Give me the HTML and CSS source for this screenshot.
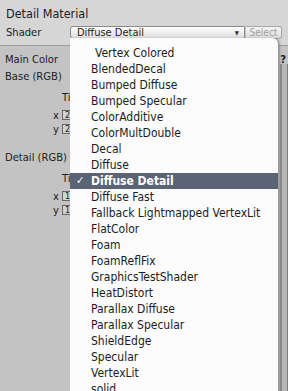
FILE: index.html
```html
<!DOCTYPE html>
<html>
<head>
  <meta charset="UTF-8">
  <meta name="viewport" content="width=device-width,initial-scale=1.0">
  <title>Detail Material</title>
  <link rel="stylesheet" href="styles.css">
</head>
<body>
  <div class="inspector">
    <div class="header">
      <div class="title">Detail Material</div>
      <div class="shader-row">
        <span class="shader-label">Shader</span>
        <div class="dropdown">
          <span>Diffuse Detail</span>
          <span class="arrow">&#9660;</span>
        </div>
        <div class="select-btn">Select</div>
      </div>
    </div>

    <div class="props">
      <div class="row head-row">
        <span>Main Color</span>
        <span class="help">?</span>
      </div>
      <div class="row">Base (RGB)</div>

      <div class="tiling">
        <div class="tl-head">Ti</div>
        <div class="tl-row"><span class="axis">x</span><span class="box">2</span></div>
        <div class="tl-row"><span class="axis">y</span><span class="box">2</span></div>
      </div>

      <div class="row detail">Detail (RGB)</div>

      <div class="tiling">
        <div class="tl-head">Ti</div>
        <div class="tl-row"><span class="axis">x</span><span class="box">1</span></div>
        <div class="tl-row"><span class="axis">y</span><span class="box">1</span></div>
      </div>
    </div>

    <div class="scroll-strip"></div>

    <ul class="menu">
      <li class="indent">Vertex Colored</li>
      <li>BlendedDecal</li>
      <li>Bumped Diffuse</li>
      <li>Bumped Specular</li>
      <li>ColorAdditive</li>
      <li>ColorMultDouble</li>
      <li>Decal</li>
      <li>Diffuse</li>
      <li class="active"><span class="check">&#10003;</span>Diffuse Detail</li>
      <li>Diffuse Fast</li>
      <li>Fallback Lightmapped VertexLit</li>
      <li>FlatColor</li>
      <li>Foam</li>
      <li>FoamReflFix</li>
      <li>GraphicsTestShader</li>
      <li>HeatDistort</li>
      <li>Parallax Diffuse</li>
      <li>Parallax Specular</li>
      <li>ShieldEdge</li>
      <li>Specular</li>
      <li>VertexLit</li>
      <li>solid</li>
    </ul>
  </div>
</body>
</html>
```

FILE: styles.css
```css
body {
  margin: 0;
  font-family: "DejaVu Sans Condensed", "DejaVu Sans", Verdana, sans-serif;
  font-stretch: condensed;
  font-size: 11.1px;
  color: #1c1c1c;
}

.inspector {
  position: relative;
  width: 288px;
  height: 391px;
  overflow: hidden;
  background: #c3c3c3;
}

.header {
  height: 45px;
  background: #d6d6d6;
  border-bottom: 1px solid #9c9c9c;
  padding-left: 6px;
}

.title {
  padding-top: 6px;
  height: 16px;
  line-height: 16px;
  font-size: 12.5px;
}

.shader-row {
  display: flex;
  align-items: center;
  height: 14px;
  margin-top: 3px;
}

.shader-label {
  width: 64px;
}

.dropdown {
  width: 162px;
  height: 11px;
  padding: 0 5px 0 6px;
  display: flex;
  align-items: center;
  justify-content: space-between;
  font-size: 11px;
  background: linear-gradient(#ffffff, #dedede);
  border: 1px solid #8a8a8a;
  border-radius: 3px 0 0 3px;
}

.arrow {
  font-size: 6px;
  color: #333;
}

.select-btn {
  width: 35px;
  height: 11px;
  line-height: 11px;
  text-align: center;
  font-size: 10px;
  color: #a0a0a0;
  background: linear-gradient(#f4f4f4, #dcdcdc);
  border: 1px solid #a8a8a8;
  border-left: 1px solid #c4c4c4;
  border-radius: 0 3px 3px 0;
}

.props {
  padding: 6px 0 0 5px;
}

.row {
  height: 17px;
  line-height: 16px;
}

.head-row {
  display: flex;
  justify-content: space-between;
}

.help {
  font-weight: bold;
  margin-right: 2px;
}

.tiling {
  padding-left: 48px;
  margin-top: 4px;
}

.tl-head {
  height: 18px;
  line-height: 16px;
  padding-left: 9px;
}

.tl-row {
  display: flex;
  align-items: center;
  height: 14px;
}

.axis {
  width: 9px;
}

.box {
  width: 10px;
  height: 8px;
  line-height: 8px;
  font-size: 9px;
  padding-left: 2px;
  border: 1px solid #6f6262;
  background: #d2d2d2;
}

.detail {
  margin-top: 14px;
}

.scroll-strip {
  position: absolute;
  top: 64px;
  right: 0;
  bottom: 0;
  width: 5px;
  background: #b7b7b7;
  border-left: 2px solid #8f8f8f;
  border-right: 1px solid #7d7d7d;
}

.menu {
  position: absolute;
  left: 70px;
  top: 38px;
  width: 208px;
  height: 360px;
  margin: 0;
  padding: 7px 0 0;
  list-style: none;
  font-size: 12px;
  background: #fbfbfb;
  border-radius: 0 6px 0 0;
  border-right: 1px solid #9a9a9a;
  box-shadow: 1px 0 2px rgba(0,0,0,0.25);
}

.menu li {
  position: relative;
  height: 16px;
  line-height: 16px;
  padding-left: 21px;
  white-space: nowrap;
}

.menu li.indent {
  padding-left: 25px;
}

.menu li.active {
  background: #5b6474;
  color: #fff;
  font-weight: bold;
}

.check {
  position: absolute;
  left: 6px;
  font-size: 11px;
}
```
